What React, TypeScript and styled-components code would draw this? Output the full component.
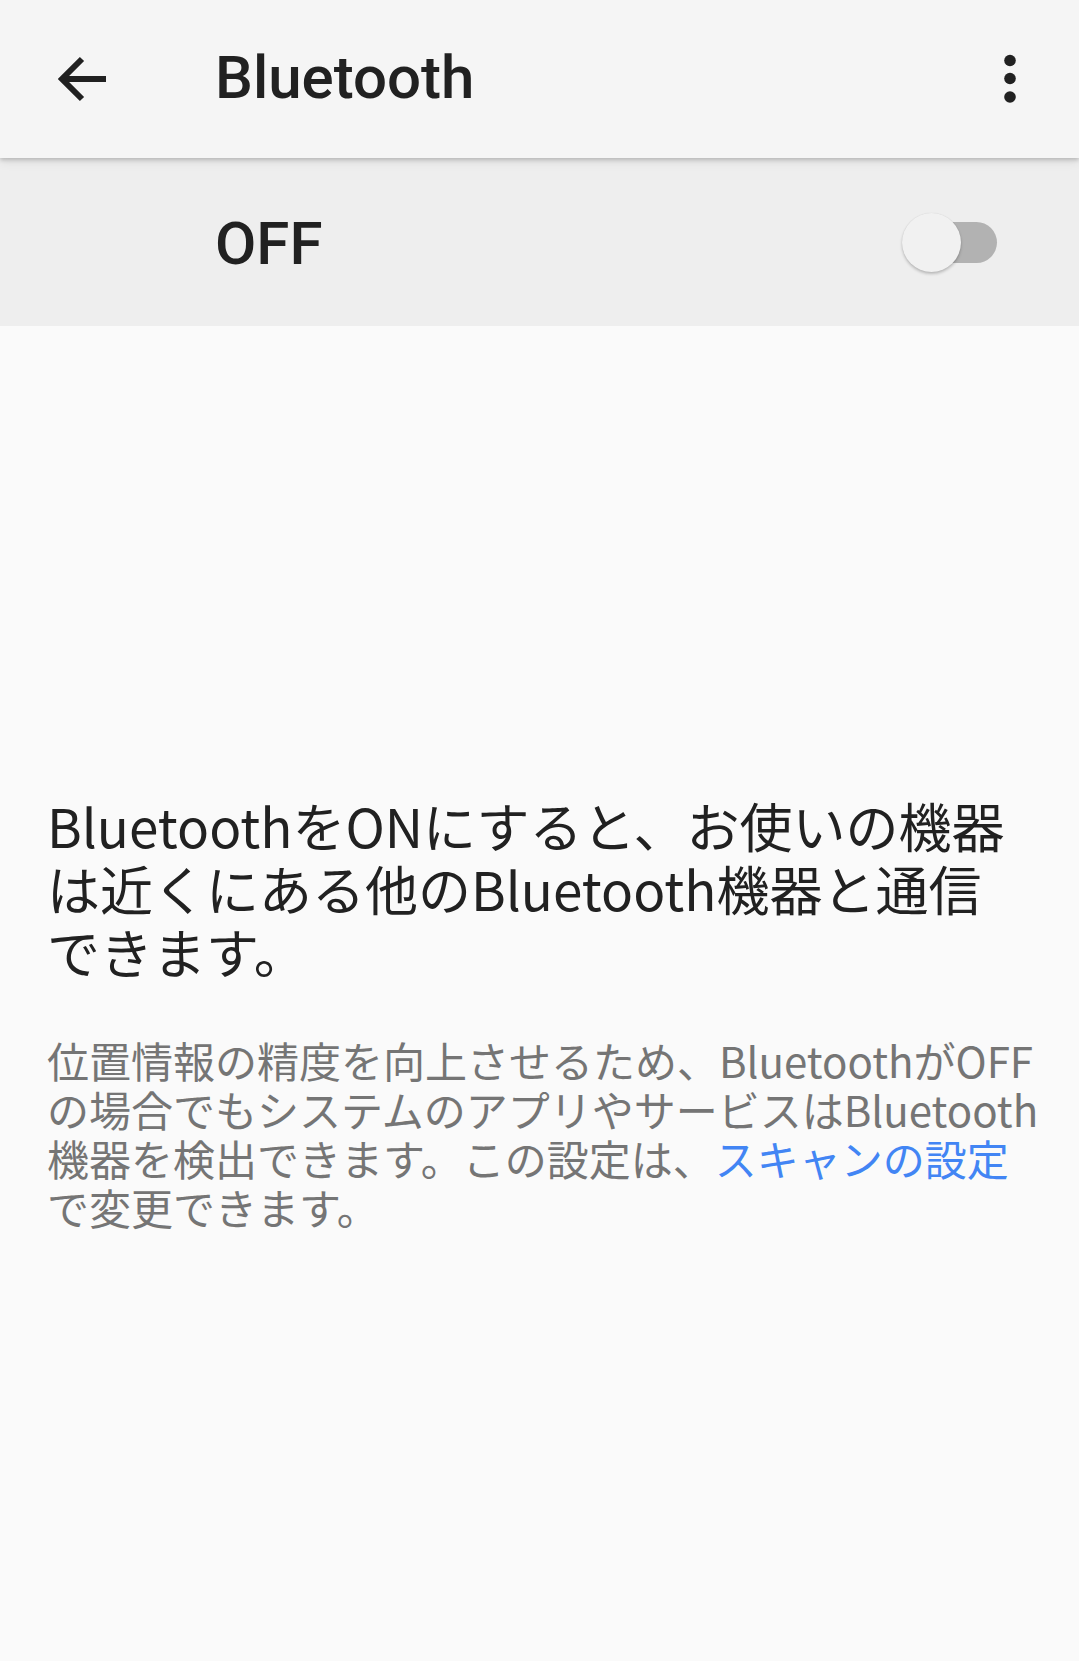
import React from "react";
import styled, { createGlobalStyle } from "styled-components";

const GlobalStyle = createGlobalStyle`
  html, body {
    margin: 0;
    padding: 0;
    background: #fafafa;
  }
  body {
    font-family: "Noto Sans CJK JP", "Noto Sans", sans-serif;
    -webkit-font-smoothing: antialiased;
  }
`;

const Screen = styled.div`
  width: 1079px;
  min-height: 1661px;
  background: #fafafa;
  display: flex;
  flex-direction: column;
`;

const AppBar = styled.header`
  position: relative;
  z-index: 2;
  height: 158px;
  background: #f5f5f5;
  display: flex;
  align-items: center;
  padding: 0 36px 0 50px;
  box-sizing: border-box;
  box-shadow: 0 2px 4px rgba(0, 0, 0, 0.18), 0 4px 10px rgba(0, 0, 0, 0.08);
`;

const IconButton = styled.button`
  width: 66px;
  height: 66px;
  padding: 0;
  border: 0;
  background: transparent;
  display: flex;
  align-items: center;
  justify-content: center;
  color: #212121;
  cursor: pointer;
`;

const Title = styled.h1`
  margin: -4px 0 0 99px;
  flex: 1;
  font-family: Roboto, "Noto Sans", sans-serif;
  font-weight: 500;
  font-size: 60px;
  color: #212121;
`;

const SwitchRow = styled.div`
  height: 168px;
  background: #eeeeee;
  display: flex;
  align-items: center;
  justify-content: space-between;
  padding: 0 82px 0 215px;
  box-sizing: border-box;
`;

const SwitchLabel = styled.span`
  font-family: Roboto, "Noto Sans", sans-serif;
  font-weight: 500;
  font-size: 60px;
  color: #212121;
  margin-top: 2px;
`;

const Track = styled.div`
  position: relative;
  width: 92px;
  height: 41px;
  border-radius: 21px;
  background: #b2b2b2;
  margin-top: 0;
`;

const Thumb = styled.div`
  position: absolute;
  left: -3px;
  top: -9px;
  width: 59px;
  height: 59px;
  border-radius: 50%;
  background: #f1f1f1;
  box-shadow: 0 2px 3px rgba(0, 0, 0, 0.22), 0 0 1px rgba(0, 0, 0, 0.12);
`;

const Body = styled.main`
  padding: 468px 20px 0 47px;
  display: flex;
  flex-direction: column;
`;

const Lead = styled.p`
  margin: 0;
  font-size: 53px;
  line-height: 63px;
  color: #212121;
  white-space: nowrap;
`;

const Note = styled.p`
  margin: 52px 0 0;
  font-size: 42px;
  line-height: 49px;
  color: #757575;
  white-space: nowrap;
`;

const Link = styled.a`
  color: #4285f4;
  text-decoration: none;
`;

const BackArrow = () => (
  <svg width="50" height="48" viewBox="0 0 50 48" fill="none">
    <path
      d="M48 24H5M24 4L4 24l20 20"
      stroke="currentColor"
      strokeWidth="6"
      strokeLinecap="butt"
      strokeLinejoin="miter"
    />
  </svg>
);

const MoreDots = () => (
  <svg width="14" height="50" viewBox="0 0 14 50" fill="currentColor">
    <circle cx="7" cy="6.5" r="5.8" />
    <circle cx="7" cy="24.5" r="5.8" />
    <circle cx="7" cy="43" r="5.8" />
  </svg>
);

export default function App() {
  return (
    <>
      <GlobalStyle />
      <Screen>
        <AppBar>
          <IconButton aria-label="戻る">
            <BackArrow />
          </IconButton>
          <Title>Bluetooth</Title>
          <IconButton aria-label="その他のオプション">
            <MoreDots />
          </IconButton>
        </AppBar>
        <SwitchRow>
          <SwitchLabel>OFF</SwitchLabel>
          <Track>
            <Thumb />
          </Track>
        </SwitchRow>
        <Body>
          <Lead>
            BluetoothをONにすると、お使いの機器
            <br />
            は近くにある他のBluetooth機器と通信
            <br />
            できます。
          </Lead>
          <Note>
            位置情報の精度を向上させるため、BluetoothがOFF
            <br />
            の場合でもシステムのアプリやサービスはBluetooth
            <br />
            機器を検出できます。この設定は、<Link href="#">スキャンの設定</Link>
            <br />
            で変更できます。
          </Note>
        </Body>
      </Screen>
    </>
  );
}
